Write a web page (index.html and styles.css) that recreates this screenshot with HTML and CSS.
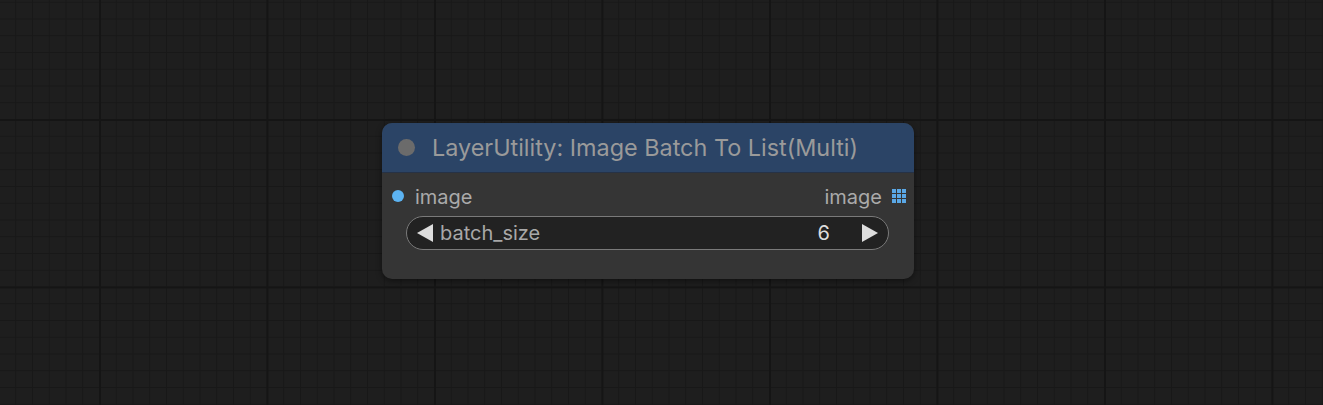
FILE: index.html
```html
<!DOCTYPE html>
<html>
<head>
<meta charset="utf-8">
<link rel="stylesheet" href="styles.css">
</head>
<body>
<div class="canvas">
  <div class="node">
    <div class="node-title">
      <span class="title-dot"></span>
      <span class="title-text">LayerUtility: Image Batch To List(Multi)</span>
    </div>
    <div class="node-body">
      <div class="slots">
        <div class="slot slot-in">
          <span class="in-dot"></span>
          <span class="slot-label">image</span>
        </div>
        <div class="slot slot-out">
          <span class="slot-label">image</span>
          <svg class="grid-icon" width="14" height="14" viewBox="0 0 14 14">
            <rect x="0" y="0" width="4" height="4"/>
            <rect x="5" y="0" width="4" height="4"/>
            <rect x="10" y="0" width="4" height="4"/>
            <rect x="0" y="5" width="4" height="4"/>
            <rect x="5" y="5" width="4" height="4"/>
            <rect x="10" y="5" width="4" height="4"/>
            <rect x="0" y="10" width="4" height="4"/>
            <rect x="5" y="10" width="4" height="4"/>
            <rect x="10" y="10" width="4" height="4"/>
          </svg>
        </div>
      </div>
      <div class="widget">
        <svg class="arrow" width="16" height="18" viewBox="0 0 16 18"><polygon points="16,0 16,18 0,9"/></svg>
        <span class="widget-label">batch_size</span>
        <span class="widget-value">6</span>
        <svg class="arrow" width="16" height="18" viewBox="0 0 16 18"><polygon points="0,0 0,18 16,9"/></svg>
      </div>
    </div>
  </div>
</div>
</body>
</html>
```
FILE: styles.css
```css
html, body {
  margin: 0;
  padding: 0;
  background: #1d1d1d;
}
.canvas {
  position: relative;
  width: 1323px;
  height: 405px;
  overflow: hidden;
  background-color: #1e1e1e;
  background-image:
    linear-gradient(to right, #151515 0, #151515 2px, transparent 2px),
    linear-gradient(to bottom, #151515 0, #151515 2px, transparent 2px),
    linear-gradient(to right, #181818 0, #181818 1px, transparent 1px),
    linear-gradient(to bottom, #181818 0, #181818 1px, transparent 1px);
  background-size: 167.5px 167.5px, 167.5px 167.5px, 16.75px 16.75px, 16.75px 16.75px;
  background-position: 99px 119px, 99px 119px, 99px 119px, 99px 119px;
  font-family: Inter, "Noto Sans", sans-serif;
}
.node {
  position: absolute;
  left: 382px;
  top: 123px;
  width: 532px;
  height: 156px;
  border-radius: 10px;
  background: #353535;
  box-shadow: 0 2px 6px rgba(0,0,0,0.45);
  display: flex;
  flex-direction: column;
  overflow: hidden;
}
.node-title {
  height: 49px;
  background: #2b4466;
  border-bottom: 1px solid #263246;
  display: flex;
  align-items: center;
  padding-left: 16px;
  gap: 17px;
}
.title-dot {
  width: 17px;
  height: 17px;
  border-radius: 50%;
  background: #6b6b6b;
}
.title-text {
  color: #9a9a9a;
  font-size: 23.4px;
  margin-top: 0px;
}
.node-body {
  flex: 1;
  display: flex;
  flex-direction: column;
  padding: 12px 8px 0 10px;
}
.slots {
  display: flex;
  justify-content: space-between;
  align-items: center;
  height: 24px;
}
.slot {
  display: flex;
  align-items: center;
}
.slot-in {
  gap: 11px;
}
.slot-out {
  gap: 10px;
}
.in-dot {
  width: 12px;
  height: 12px;
  border-radius: 50%;
  background: #5cb3f2;
  margin-top: -3px;
}
.slot-label {
  color: #aaaaaa;
  font-size: 20px;
}
.grid-icon {
  fill: #5aa8e6;
  margin-top: -3px;
}
.widget {
  margin: 7px 17px 0 14px;
  height: 32px;
  border: 1px solid #7a7a7a;
  border-radius: 17px;
  background: #222222;
  display: flex;
  align-items: center;
  padding: 0 10px 0 10px;
}
.arrow {
  fill: #dddddd;
}
.widget-label {
  color: #a8a8a8;
  font-size: 20px;
  margin-left: 7px;
  flex: 1;
}
.widget-value {
  color: #dddddd;
  font-size: 20px;
  margin-right: 32px;
}
```
